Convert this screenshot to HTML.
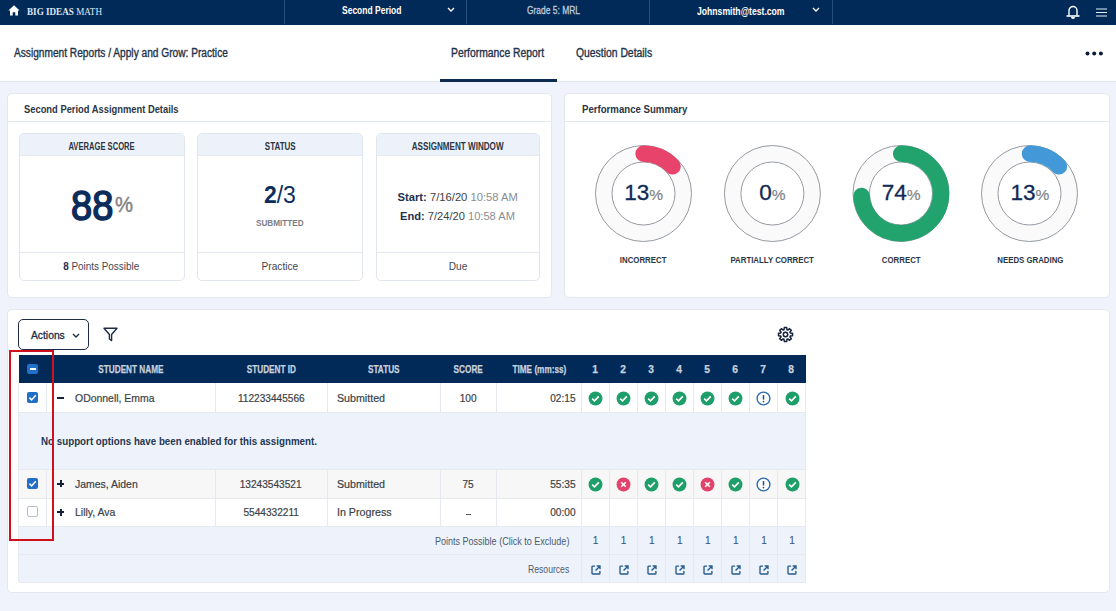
<!DOCTYPE html>
<html><head><meta charset="utf-8">
<style>
*{box-sizing:border-box;margin:0;padding:0}
html,body{width:1116px;height:611px;overflow:hidden;background:#f0f3fb;font-family:"Liberation Sans",sans-serif;color:#263750}
.a{position:absolute;white-space:nowrap}
#nav{position:absolute;left:0;top:0;width:1116px;height:25px;background:#022a58}
.sep{position:absolute;top:0;width:1px;height:24px;background:#2a4d7a}
#hdr{position:absolute;left:0;top:25px;width:1116px;height:57px;background:#fff;border-bottom:1px solid #dfe5ee}
.panel{position:absolute;background:#fff;border:1px solid #e3e8ef;border-radius:5px}
.card{position:absolute;top:133px;width:167px;height:148px;border:1px solid #e1e6ee;border-radius:5px;background:#fff;overflow:hidden}
.card .h{position:absolute;left:0;top:0;width:100%;height:22px;background:#edf2fa;border-bottom:1px solid #e6ebf2}
.card .f{position:absolute;left:0;top:117.5px;width:100%;height:1px;background:#e3e8ef}
</style></head><body>
<div id="nav">
  <svg class="a" style="left:8px;top:4.5px" width="12" height="11" viewBox="0 0 12 11"><path d="M6 0.3 L11.6 5.6 H10 V10.5 H7.3 V7.3 H4.7 V10.5 H2 V5.6 H0.4 Z" fill="#fff"/></svg>
  <div class="a" style="left:27px;top:5.5px;font-family:'Liberation Serif',serif;font-size:10.5px;color:#dfe8f5;transform:scaleX(0.868);transform-origin:0 0"><b>BIG IDEAS</b> MATH</div>
  <div class="sep" style="left:283.5px"></div>
  <div class="sep" style="left:466px"></div>
  <div class="sep" style="left:649px"></div>
  <div class="sep" style="left:832px"></div>
  <div class="a" id="t_sp" style="transform:scaleX(0.808);transform-origin:0 0;left:342px;top:4px;font-size:10.5px;font-weight:bold;color:#fff">Second Period</div>
  <svg class="a" style="left:447px;top:7px" width="8" height="5" viewBox="0 0 8 5"><path d="M1 1 L4 4 L7 1" stroke="#fff" stroke-width="1.3" fill="none"/></svg>
  <div class="a" id="t_gr" style="transform:scaleX(0.803);transform-origin:0 0;left:527px;top:4px;font-size:10.5px;color:#bfcbdd;-webkit-text-stroke:0.3px #bfcbdd">Grade 5: MRL</div>
  <div class="a" id="t_em" style="transform:scaleX(0.822);transform-origin:0 0;left:697px;top:5px;font-size:10.5px;font-weight:bold;color:#fff">Johnsmith@test.com</div>
  <svg class="a" style="left:812px;top:7px" width="8" height="5" viewBox="0 0 8 5"><path d="M1 1 L4 4 L7 1" stroke="#fff" stroke-width="1.3" fill="none"/></svg>
  <svg class="a" style="left:1066px;top:5px" width="14" height="15" viewBox="0 0 14 15"><path d="M3 10.5 V5.5 A4 4 0 0 1 11 5.5 V10.5" stroke="#fff" stroke-width="1.4" fill="none"/><path d="M0.5 11 H13.5" stroke="#fff" stroke-width="1.6"/><path d="M5 12 A2 2 0 0 0 9 12 Z" fill="#fff"/></svg>
  <svg class="a" style="left:1096px;top:8px" width="11" height="9" viewBox="0 0 11 9"><path d="M0 1 H11 M0 4.5 H11 M0 8 H11" stroke="#e6ecf5" stroke-width="1.1"/></svg>
</div>
<div id="hdr">
  <div class="a" id="t_ar" style="transform:scaleX(0.846);transform-origin:0 0;-webkit-text-stroke:0.35px #22324a;left:14px;top:21px;font-size:12px;color:#22324a">Assignment Reports / Apply and Grow: Practice</div>
  <div class="a" id="t_pr" style="transform:scaleX(0.862);transform-origin:0 0;-webkit-text-stroke:0.35px #22324a;left:451px;top:21px;font-size:12px;color:#22324a">Performance Report</div>
  <div class="a" id="t_qd" style="transform:scaleX(0.864);transform-origin:0 0;-webkit-text-stroke:0.35px #22324a;left:576px;top:21px;font-size:12px;color:#22324a">Question Details</div>
  <div class="a" style="left:440px;top:54px;width:117px;height:3px;background:#0a2a4f"></div>
  <svg class="a" style="left:1085.4px;top:25.5px" width="19" height="5" viewBox="0 0 19 5"><circle cx="2.5" cy="2.5" r="2" fill="#0d1b33"/><circle cx="9.2" cy="2.5" r="2" fill="#0d1b33"/><circle cx="15.9" cy="2.5" r="2" fill="#0d1b33"/></svg>
</div>

<!-- left panel -->
<div class="panel" style="left:6.5px;top:93px;width:545.5px;height:204.5px"><div class="a" style="left:0;top:27px;width:543.5px;height:1px;background:#e3e8ef"></div></div>
<div class="a" id="t_spad" style="transform:scaleX(0.891);transform-origin:0 0;font-weight:bold;left:24px;top:102.5px;font-size:10.5px;color:#2b3644">Second Period Assignment Details</div>
<div class="card" style="left:18.5px;width:166.3px"><div class="h"></div><div class="f"></div></div>
<div class="card" style="left:196.6px;width:166.6px"><div class="h"></div><div class="f"></div></div>
<div class="card" style="left:375.8px;width:164.3px"><div class="h"></div><div class="f"></div></div>
<div class="a" id="t_avg" style="left:21.650000000000006px;top:140.5px;width:160px;text-align:center;font-size:10px;font-weight:bold;color:#2b3644;"><span style="display:inline-block;transform:scaleX(0.76)">AVERAGE SCORE</span></div>
<div class="a" id="t_st" style="left:199.89999999999998px;top:140.5px;width:160px;text-align:center;font-size:10px;font-weight:bold;color:#2b3644;"><span style="display:inline-block;transform:scaleX(0.8)">STATUS</span></div>
<div class="a" id="t_aw" style="left:377.95000000000005px;top:140.5px;width:160px;text-align:center;font-size:10px;font-weight:bold;color:#2b3644;"><span style="display:inline-block;transform:scaleX(0.81)">ASSIGNMENT WINDOW</span></div>
<div class="a" id="t_88" style="transform:scaleX(0.885);transform-origin:0 0;left:71px;top:181px;font-size:43px;color:#0c2d5c;-webkit-text-stroke:1.6px #0c2d5c">88</div>
<div class="a" id="t_pc" style="left:115px;top:192px;font-size:22px;color:#808184;-webkit-text-stroke:0.4px #808184;transform:scaleX(0.92);transform-origin:0 0">%</div>
<div class="a" id="t_pp" style="left:21.650000000000006px;top:260px;width:160px;text-align:center;font-size:11px;font-weight:normal;color:#3f4652;"><span style="display:inline-block;transform:scaleX(0.9)"><b style="color:#1d3150">8</b> Points Possible</span></div>
<div class="a" id="t_23" style="left:199.89999999999998px;top:182px;width:160px;text-align:center;font-size:23px;font-weight:normal;color:#0c2d5c;"><span style="display:inline-block;transform:scaleX(1.0)"><b>2</b>/3</span></div>
<div class="a" id="t_sub" style="left:199.89999999999998px;top:218px;width:160px;text-align:center;font-size:8.5px;font-weight:bold;color:#7b7e85;"><span style="display:inline-block;transform:scaleX(0.96)">SUBMITTED</span></div>
<div class="a" id="t_prac" style="left:199.89999999999998px;top:260px;width:160px;text-align:center;font-size:11px;font-weight:normal;color:#3f4652;"><span style="display:inline-block;transform:scaleX(0.92)">Practice</span></div>
<div class="a" id="t_s1" style="left:377.95000000000005px;top:190.7px;width:160px;text-align:center;font-size:11.5px;font-weight:normal;color:#3a3d42;"><span style="display:inline-block;transform:scaleX(0.975)"><b style="color:#1d3150">Start:</b> 7/16/20 <span style="color:#8a8d93">10:58 AM</span></span></div>
<div class="a" id="t_s2" style="left:377.95000000000005px;top:209.7px;width:160px;text-align:center;font-size:11.5px;font-weight:normal;color:#3a3d42;"><span style="display:inline-block;transform:scaleX(0.966)"><b style="color:#1d3150">End:</b> 7/24/20 <span style="color:#8a8d93">10:58 AM</span></span></div>
<div class="a" id="t_due" style="left:377.95000000000005px;top:260px;width:160px;text-align:center;font-size:11px;font-weight:normal;color:#3f4652;"><span style="display:inline-block;transform:scaleX(0.92)">Due</span></div>

<!-- right panel -->
<div class="panel" style="left:564px;top:93px;width:545.5px;height:204.5px"><div class="a" style="left:0;top:27px;width:543.5px;height:1px;background:#e3e8ef"></div></div>
<div class="a" id="t_ps" style="transform:scaleX(0.917);transform-origin:0 0;font-weight:bold;left:582px;top:102.5px;font-size:10.5px;color:#2b3644">Performance Summary</div>

<svg class="a" style="left:565px;top:130px" width="545" height="130" viewBox="565 130 545 130">
  <g fill="#fafafa" stroke="#959aa2" stroke-width="1">
    <circle cx="643.5" cy="193.5" r="48"/><circle cx="772.4" cy="193.5" r="48"/><circle cx="901" cy="193.5" r="48"/><circle cx="1029.5" cy="193.5" r="48"/>
  </g>
  <g fill="#fff" stroke="#959aa2" stroke-width="1">
    <circle cx="643.5" cy="193.5" r="31.5"/><circle cx="772.4" cy="193.5" r="31.5"/><circle cx="901" cy="193.5" r="31.5"/><circle cx="1029.5" cy="193.5" r="31.5"/>
  </g>
  <path d="M643.6 153.75 A39.75 39.75 0 0 1 672.58 166.29" stroke="#e8436b" stroke-width="16.5" fill="none" stroke-linecap="round"/>
  <path d="M901.2 153.75 A39.75 39.75 0 1 1 861.53 196.00" stroke="#22a26c" stroke-width="16.5" fill="none" stroke-linecap="round"/>
  <path d="M1030 153.75 A39.75 39.75 0 0 1 1058.98 166.29" stroke="#4398d8" stroke-width="16.5" fill="none" stroke-linecap="round"/>
</svg>
<div class="a" id="t_d0" style="left:603.6px;top:180px;width:80px;text-align:center;font-size:22.5px;color:#0f2a55;-webkit-text-stroke:0.3px #0f2a55">13<span style="font-size:15.5px;color:#808285;-webkit-text-stroke:0.2px #808285">%</span></div>
<div class="a" id="t_l0" style="left:583.6px;top:254px;width:120px;text-align:center;font-size:9.8px;font-weight:bold;color:#2b3644"><span style="display:inline-block;transform:scaleX(0.8)">INCORRECT</span></div>
<div class="a" id="t_d1" style="left:732.4px;top:180px;width:80px;text-align:center;font-size:22.5px;color:#0f2a55;-webkit-text-stroke:0.3px #0f2a55">0<span style="font-size:15.5px;color:#808285;-webkit-text-stroke:0.2px #808285">%</span></div>
<div class="a" id="t_l1" style="left:712.4px;top:254px;width:120px;text-align:center;font-size:9.8px;font-weight:bold;color:#2b3644"><span style="display:inline-block;transform:scaleX(0.8)">PARTIALLY CORRECT</span></div>
<div class="a" id="t_d2" style="left:861.2px;top:180px;width:80px;text-align:center;font-size:22.5px;color:#0f2a55;-webkit-text-stroke:0.3px #0f2a55">74<span style="font-size:15.5px;color:#808285;-webkit-text-stroke:0.2px #808285">%</span></div>
<div class="a" id="t_l2" style="left:841.2px;top:254px;width:120px;text-align:center;font-size:9.8px;font-weight:bold;color:#2b3644"><span style="display:inline-block;transform:scaleX(0.8)">CORRECT</span></div>
<div class="a" id="t_d3" style="left:990px;top:180px;width:80px;text-align:center;font-size:22.5px;color:#0f2a55;-webkit-text-stroke:0.3px #0f2a55">13<span style="font-size:15.5px;color:#808285;-webkit-text-stroke:0.2px #808285">%</span></div>
<div class="a" id="t_l3" style="left:970px;top:254px;width:120px;text-align:center;font-size:9.8px;font-weight:bold;color:#2b3644"><span style="display:inline-block;transform:scaleX(0.8)">NEEDS GRADING</span></div>












<!-- TABLE START -->
<div class="panel" style="left:7px;top:309px;width:1103px;height:284px"></div>
<div class="a" style="left:18px;top:319px;width:71px;height:31px;border:1.5px solid #1c2d45;border-radius:5px;background:#fff"></div>
<div class="a" id="t_act" style="left:31px;top:329px;font-size:10.5px;color:#1c2d45;-webkit-text-stroke:0.3px #1c2d45;transform:scaleX(0.98);transform-origin:0 0">Actions</div>
<svg class="a" style="left:72px;top:333px" width="8" height="5" viewBox="0 0 8 5"><path d="M1 1 L4 4 L7 1" stroke="#1c2d45" stroke-width="1.4" fill="none"/></svg>
<svg class="a" style="left:103px;top:327px" width="15" height="15" viewBox="0 0 15 15"><path d="M1 1.2 H14 L8.6 7.5 V13.6 L6.4 12 V7.5 Z" stroke="#1c2d45" stroke-width="1.4" fill="none" stroke-linejoin="round"/></svg>
<svg class="a" style="left:777px;top:326px" width="17" height="17" viewBox="-8.5 -8.5 17 17"><path id="gearp" d="M-1.48 -4.78 L-1.20 -7.00 L1.20 -7.00 L1.48 -4.78 L2.33 -4.42 L4.10 -5.80 L5.80 -4.10 L4.42 -2.33 L4.78 -1.48 L7.00 -1.20 L7.00 1.20 L4.78 1.48 L4.42 2.33 L5.80 4.10 L4.10 5.80 L2.33 4.42 L1.48 4.78 L1.20 7.00 L-1.20 7.00 L-1.48 4.78 L-2.33 4.42 L-4.10 5.80 L-5.80 4.10 L-4.42 2.33 L-4.78 1.48 L-7.00 1.20 L-7.00 -1.20 L-4.78 -1.48 L-4.42 -2.33 L-5.80 -4.10 L-4.10 -5.80 L-2.33 -4.42 Z" stroke="#13223a" stroke-width="1.5" fill="none" stroke-linejoin="round"/><circle r="2.2" stroke="#13223a" stroke-width="1.5" fill="none"/></svg>
<div class="a" style="left:18.5px;top:355px;width:787.0px;height:28px;background:#022a58;"></div>
<div class="a" style="left:18.5px;top:383px;width:787.0px;height:29px;background:#fff;"></div>
<div class="a" style="left:18.5px;top:412px;width:787.0px;height:57px;background:#eef3fb;"></div>
<div class="a" style="left:18.5px;top:469px;width:787.0px;height:29px;background:#f7f7f8;"></div>
<div class="a" style="left:18.5px;top:498px;width:787.0px;height:28px;background:#fff;"></div>
<div class="a" style="left:18.5px;top:526px;width:787.0px;height:56px;background:#eef3fb;"></div>
<div class="a" style="left:18.5px;top:411.5px;width:787.0px;height:1.0px;background:#e6e9ef;"></div>
<div class="a" style="left:18.5px;top:468.5px;width:787.0px;height:1.0px;background:#e6e9ef;"></div>
<div class="a" style="left:18.5px;top:497.5px;width:787.0px;height:1.0px;background:#e6e9ef;"></div>
<div class="a" style="left:18.5px;top:525.5px;width:787.0px;height:1.0px;background:#e6e9ef;"></div>
<div class="a" style="left:18.5px;top:553.5px;width:787.0px;height:1.0px;background:#e6e9ef;"></div>
<div class="a" style="left:18.5px;top:581.5px;width:787.0px;height:1.0px;background:#e6e9ef;"></div>
<div class="a" style="left:46.0px;top:383px;width:1.0px;height:29px;background:#e6e9ef;"></div>
<div class="a" style="left:214.5px;top:383px;width:1.0px;height:29px;background:#e6e9ef;"></div>
<div class="a" style="left:326.7px;top:383px;width:1.0px;height:29px;background:#e6e9ef;"></div>
<div class="a" style="left:439.5px;top:383px;width:1.0px;height:29px;background:#e6e9ef;"></div>
<div class="a" style="left:496.3px;top:383px;width:1.0px;height:29px;background:#e6e9ef;"></div>
<div class="a" style="left:581.0px;top:383px;width:1.0px;height:29px;background:#e6e9ef;"></div>
<div class="a" style="left:609.0px;top:383px;width:1.0px;height:29px;background:#e6e9ef;"></div>
<div class="a" style="left:637.0px;top:383px;width:1.0px;height:29px;background:#e6e9ef;"></div>
<div class="a" style="left:665.0px;top:383px;width:1.0px;height:29px;background:#e6e9ef;"></div>
<div class="a" style="left:693.0px;top:383px;width:1.0px;height:29px;background:#e6e9ef;"></div>
<div class="a" style="left:721.0px;top:383px;width:1.0px;height:29px;background:#e6e9ef;"></div>
<div class="a" style="left:749.0px;top:383px;width:1.0px;height:29px;background:#e6e9ef;"></div>
<div class="a" style="left:777.0px;top:383px;width:1.0px;height:29px;background:#e6e9ef;"></div>
<div class="a" style="left:805.0px;top:383px;width:1.0px;height:29px;background:#e6e9ef;"></div>
<div class="a" style="left:805.0px;top:383px;width:1.0px;height:29px;background:#e6e9ef;"></div>
<div class="a" style="left:18.0px;top:383px;width:1.0px;height:29px;background:#e6e9ef;"></div>
<div class="a" style="left:46.0px;top:469px;width:1.0px;height:57px;background:#e6e9ef;"></div>
<div class="a" style="left:214.5px;top:469px;width:1.0px;height:57px;background:#e6e9ef;"></div>
<div class="a" style="left:326.7px;top:469px;width:1.0px;height:57px;background:#e6e9ef;"></div>
<div class="a" style="left:439.5px;top:469px;width:1.0px;height:57px;background:#e6e9ef;"></div>
<div class="a" style="left:496.3px;top:469px;width:1.0px;height:57px;background:#e6e9ef;"></div>
<div class="a" style="left:581.0px;top:469px;width:1.0px;height:57px;background:#e6e9ef;"></div>
<div class="a" style="left:609.0px;top:469px;width:1.0px;height:57px;background:#e6e9ef;"></div>
<div class="a" style="left:637.0px;top:469px;width:1.0px;height:57px;background:#e6e9ef;"></div>
<div class="a" style="left:665.0px;top:469px;width:1.0px;height:57px;background:#e6e9ef;"></div>
<div class="a" style="left:693.0px;top:469px;width:1.0px;height:57px;background:#e6e9ef;"></div>
<div class="a" style="left:721.0px;top:469px;width:1.0px;height:57px;background:#e6e9ef;"></div>
<div class="a" style="left:749.0px;top:469px;width:1.0px;height:57px;background:#e6e9ef;"></div>
<div class="a" style="left:777.0px;top:469px;width:1.0px;height:57px;background:#e6e9ef;"></div>
<div class="a" style="left:805.0px;top:469px;width:1.0px;height:57px;background:#e6e9ef;"></div>
<div class="a" style="left:805.0px;top:469px;width:1.0px;height:57px;background:#e6e9ef;"></div>
<div class="a" style="left:18.0px;top:469px;width:1.0px;height:57px;background:#e6e9ef;"></div>
<div class="a" style="left:18.0px;top:412px;width:1.0px;height:57px;background:#e6e9ef;"></div>
<div class="a" style="left:805.0px;top:412px;width:1.0px;height:57px;background:#e6e9ef;"></div>
<div class="a" style="left:18.0px;top:526px;width:1.0px;height:56px;background:#e6e9ef;"></div>
<div class="a" style="left:581.0px;top:526px;width:1.0px;height:56px;background:#e6e9ef;"></div>
<div class="a" style="left:609.0px;top:526px;width:1.0px;height:56px;background:#e6e9ef;"></div>
<div class="a" style="left:637.0px;top:526px;width:1.0px;height:56px;background:#e6e9ef;"></div>
<div class="a" style="left:665.0px;top:526px;width:1.0px;height:56px;background:#e6e9ef;"></div>
<div class="a" style="left:693.0px;top:526px;width:1.0px;height:56px;background:#e6e9ef;"></div>
<div class="a" style="left:721.0px;top:526px;width:1.0px;height:56px;background:#e6e9ef;"></div>
<div class="a" style="left:749.0px;top:526px;width:1.0px;height:56px;background:#e6e9ef;"></div>
<div class="a" style="left:777.0px;top:526px;width:1.0px;height:56px;background:#e6e9ef;"></div>
<div class="a" style="left:805.0px;top:526px;width:1.0px;height:56px;background:#e6e9ef;"></div>
<div class="a" style="left:805.0px;top:526px;width:1.0px;height:56px;background:#e6e9ef;"></div>
<div class="a" id="t_h0" style="left:46.5px;top:362.5px;width:168.5px;text-align:center;font-size:10.8px;font-weight:bold;color:#c8d1de;-webkit-text-stroke:0.25px #c8d1de"><span style="display:inline-block;transform:scaleX(0.76)">STUDENT NAME</span></div>
<div class="a" id="t_h1" style="left:215px;top:362.5px;width:112.19999999999999px;text-align:center;font-size:10.8px;font-weight:bold;color:#c8d1de;-webkit-text-stroke:0.25px #c8d1de"><span style="display:inline-block;transform:scaleX(0.76)">STUDENT ID</span></div>
<div class="a" id="t_h2" style="left:327.2px;top:362.5px;width:112.80000000000001px;text-align:center;font-size:10.8px;font-weight:bold;color:#c8d1de;-webkit-text-stroke:0.25px #c8d1de"><span style="display:inline-block;transform:scaleX(0.76)">STATUS</span></div>
<div class="a" id="t_h3" style="left:440px;top:362.5px;width:56.80000000000001px;text-align:center;font-size:10.8px;font-weight:bold;color:#c8d1de;-webkit-text-stroke:0.25px #c8d1de"><span style="display:inline-block;transform:scaleX(0.76)">SCORE</span></div>
<div class="a" id="t_h4" style="left:496.8px;top:362.5px;width:84.69999999999999px;text-align:center;font-size:10.8px;font-weight:bold;color:#c8d1de;-webkit-text-stroke:0.25px #c8d1de"><span style="display:inline-block;transform:scaleX(0.76)">TIME (mm:ss)</span></div>
<div class="a" id="t_h5" style="left:581.5px;top:362.5px;width:28.0px;text-align:center;font-size:10.8px;font-weight:bold;color:#c8d1de;-webkit-text-stroke:0.25px #c8d1de"><span style="display:inline-block;transform:scaleX(0.95)">1</span></div>
<div class="a" id="t_h6" style="left:609.5px;top:362.5px;width:28.0px;text-align:center;font-size:10.8px;font-weight:bold;color:#c8d1de;-webkit-text-stroke:0.25px #c8d1de"><span style="display:inline-block;transform:scaleX(0.95)">2</span></div>
<div class="a" id="t_h7" style="left:637.5px;top:362.5px;width:28.0px;text-align:center;font-size:10.8px;font-weight:bold;color:#c8d1de;-webkit-text-stroke:0.25px #c8d1de"><span style="display:inline-block;transform:scaleX(0.95)">3</span></div>
<div class="a" id="t_h8" style="left:665.5px;top:362.5px;width:28.0px;text-align:center;font-size:10.8px;font-weight:bold;color:#c8d1de;-webkit-text-stroke:0.25px #c8d1de"><span style="display:inline-block;transform:scaleX(0.95)">4</span></div>
<div class="a" id="t_h9" style="left:693.5px;top:362.5px;width:28.0px;text-align:center;font-size:10.8px;font-weight:bold;color:#c8d1de;-webkit-text-stroke:0.25px #c8d1de"><span style="display:inline-block;transform:scaleX(0.95)">5</span></div>
<div class="a" id="t_h10" style="left:721.5px;top:362.5px;width:28.0px;text-align:center;font-size:10.8px;font-weight:bold;color:#c8d1de;-webkit-text-stroke:0.25px #c8d1de"><span style="display:inline-block;transform:scaleX(0.95)">6</span></div>
<div class="a" id="t_h11" style="left:749.5px;top:362.5px;width:28.0px;text-align:center;font-size:10.8px;font-weight:bold;color:#c8d1de;-webkit-text-stroke:0.25px #c8d1de"><span style="display:inline-block;transform:scaleX(0.95)">7</span></div>
<div class="a" id="t_h12" style="left:777.5px;top:362.5px;width:28.0px;text-align:center;font-size:10.8px;font-weight:bold;color:#c8d1de;-webkit-text-stroke:0.25px #c8d1de"><span style="display:inline-block;transform:scaleX(0.95)">8</span></div>
<div class="a" style="left:27px;top:364px;width:11px;height:10px;border-radius:2px;background:#1f70c8"></div>
<div class="a" style="left:29.5px;top:368px;width:6px;height:2px;background:#fff"></div>
<div class="a" style="left:27px;top:392px;width:11px;height:11px;border-radius:2px;background:#1f6fc6"></div><svg class="a" style="left:27px;top:392px" width="11" height="11" viewBox="0 0 11 11"><path d="M2.4 5.6 L4.6 7.8 L8.8 3.2" stroke="#fff" stroke-width="1.5" fill="none"/></svg>
<div class="a" style="left:27px;top:478px;width:11px;height:11px;border-radius:2px;background:#1f6fc6"></div><svg class="a" style="left:27px;top:478px" width="11" height="11" viewBox="0 0 11 11"><path d="M2.4 5.6 L4.6 7.8 L8.8 3.2" stroke="#fff" stroke-width="1.5" fill="none"/></svg>
<div class="a" style="left:27px;top:506px;width:11px;height:11px;border-radius:2px;background:#fff;border:1.2px solid #b9bdc4"></div>
<div class="a" style="left:57px;top:396.5px;width:7px;height:2px;background:#13223a"></div>
<div class="a" id="t_r1n" style="left:75px;top:391.5px;font-size:11px;color:#3b3f46;-webkit-text-stroke:0.2px #3b3f46;transform:scaleX(0.95);transform-origin:0 0">ODonnell, Emma</div>
<div class="a" id="t_r1i" style="left:215px;top:391.5px;width:112px;text-align:center;font-size:11px;color:#3b3f46;-webkit-text-stroke:0.2px #3b3f46;"><span style="display:inline-block;transform:scaleX(0.92)">112233445566</span></div>
<div class="a" id="t_r1s" style="left:337px;top:391.5px;font-size:11px;color:#3b3f46;-webkit-text-stroke:0.2px #3b3f46;transform:scaleX(0.97);transform-origin:0 0">Submitted</div>
<div class="a" id="t_r1c" style="left:440px;top:391.5px;width:57px;text-align:center;font-size:11px;color:#3b3f46;-webkit-text-stroke:0.2px #3b3f46;"><span style="display:inline-block;transform:scaleX(0.92)">100</span></div>
<div class="a" id="t_r1t" style="left:496px;top:391.5px;width:80px;text-align:right;font-size:11px;color:#3b3f46;-webkit-text-stroke:0.2px #3b3f46;"><span style="display:inline-block;transform:scaleX(0.92);transform-origin:100% 0">02:15</span></div>
<div class="a" style="left:57px;top:482.5px;width:7px;height:2px;background:#13223a"></div>
<div class="a" style="left:59.5px;top:480.0px;width:2px;height:7px;background:#13223a"></div>
<div class="a" id="t_r2n" style="left:75px;top:477.5px;font-size:11px;color:#3b3f46;-webkit-text-stroke:0.2px #3b3f46;transform:scaleX(0.95);transform-origin:0 0">James, Aiden</div>
<div class="a" id="t_r2i" style="left:215px;top:477.5px;width:112px;text-align:center;font-size:11px;color:#3b3f46;-webkit-text-stroke:0.2px #3b3f46;"><span style="display:inline-block;transform:scaleX(0.92)">13243543521</span></div>
<div class="a" id="t_r2s" style="left:337px;top:477.5px;font-size:11px;color:#3b3f46;-webkit-text-stroke:0.2px #3b3f46;transform:scaleX(0.97);transform-origin:0 0">Submitted</div>
<div class="a" id="t_r2c" style="left:440px;top:477.5px;width:57px;text-align:center;font-size:11px;color:#3b3f46;-webkit-text-stroke:0.2px #3b3f46;"><span style="display:inline-block;transform:scaleX(0.92)">75</span></div>
<div class="a" id="t_r2t" style="left:496px;top:477.5px;width:80px;text-align:right;font-size:11px;color:#3b3f46;-webkit-text-stroke:0.2px #3b3f46;"><span style="display:inline-block;transform:scaleX(0.92);transform-origin:100% 0">55:35</span></div>
<div class="a" style="left:57px;top:511px;width:7px;height:2px;background:#13223a"></div>
<div class="a" style="left:59.5px;top:508.5px;width:2px;height:7px;background:#13223a"></div>
<div class="a" id="t_r3n" style="left:75px;top:506px;font-size:11px;color:#3b3f46;-webkit-text-stroke:0.2px #3b3f46;transform:scaleX(0.95);transform-origin:0 0">Lilly, Ava</div>
<div class="a" id="t_r3i" style="left:215px;top:506px;width:112px;text-align:center;font-size:11px;color:#3b3f46;-webkit-text-stroke:0.2px #3b3f46;"><span style="display:inline-block;transform:scaleX(0.92)">5544332211</span></div>
<div class="a" id="t_r3s" style="left:337px;top:506px;font-size:11px;color:#3b3f46;-webkit-text-stroke:0.2px #3b3f46;transform:scaleX(0.97);transform-origin:0 0">In Progress</div>
<div class="a" id="t_r3c" style="left:440px;top:506px;width:57px;text-align:center;font-size:11px;color:#3b3f46;-webkit-text-stroke:0.2px #3b3f46;"><span style="display:inline-block;transform:scaleX(0.92)"></span></div>
<div class="a" id="t_r3t" style="left:496px;top:506px;width:80px;text-align:right;font-size:11px;color:#3b3f46;-webkit-text-stroke:0.2px #3b3f46;"><span style="display:inline-block;transform:scaleX(0.92);transform-origin:100% 0">00:00</span></div>
<div class="a" style="left:465.5px;top:513.5px;width:5.5px;height:1.2px;background:#555a62"></div>
<div class="a" id="t_nos" style="left:41px;top:435px;font-size:10.6px;font-weight:bold;color:#263750;transform:scaleX(0.923);transform-origin:0 0">No support options have been enabled for this assignment.</div>
<svg class="a" style="left:588.0px;top:390.5px" width="15" height="15" viewBox="0 0 15 15"><circle cx="7.5" cy="7.5" r="6.95" fill="#1e9e69"/><path d="M4.2 7.6 L6.5 9.8 L10.8 5.4" stroke="#fff" stroke-width="1.7" fill="none"/></svg>
<svg class="a" style="left:588.0px;top:476.5px" width="15" height="15" viewBox="0 0 15 15"><circle cx="7.5" cy="7.5" r="6.95" fill="#1e9e69"/><path d="M4.2 7.6 L6.5 9.8 L10.8 5.4" stroke="#fff" stroke-width="1.7" fill="none"/></svg>
<div class="a" style="left:581.5px;top:534.5px;width:28px;text-align:center;font-size:10px;color:#3f5677;-webkit-text-stroke:0.1px #3f5677">1</div>
<svg class="a" style="left:590.5px;top:564.5px" width="10" height="10" viewBox="0 0 11 11"><path d="M4.5 1.2 H2 A0.9 0.9 0 0 0 1.1 2.1 V9 A0.9 0.9 0 0 0 2 9.9 H8.9 A0.9 0.9 0 0 0 9.8 9 V6.5" stroke="#275c90" stroke-width="1.5" fill="none"/><path d="M6.3 1.1 H9.9 V4.7 M9.7 1.3 L5 6" stroke="#275c90" stroke-width="1.5" fill="none"/></svg>
<svg class="a" style="left:616.08px;top:390.5px" width="15" height="15" viewBox="0 0 15 15"><circle cx="7.5" cy="7.5" r="6.95" fill="#1e9e69"/><path d="M4.2 7.6 L6.5 9.8 L10.8 5.4" stroke="#fff" stroke-width="1.7" fill="none"/></svg>
<svg class="a" style="left:616.08px;top:476.5px" width="15" height="15" viewBox="0 0 15 15"><circle cx="7.5" cy="7.5" r="6.95" fill="#e2436a"/><path d="M5.2 5.2 L9.8 9.8 M9.8 5.2 L5.2 9.8" stroke="#fff" stroke-width="1.6" fill="none"/></svg>
<div class="a" style="left:609.58px;top:534.5px;width:28px;text-align:center;font-size:10px;color:#3f5677;-webkit-text-stroke:0.1px #3f5677">1</div>
<svg class="a" style="left:618.58px;top:564.5px" width="10" height="10" viewBox="0 0 11 11"><path d="M4.5 1.2 H2 A0.9 0.9 0 0 0 1.1 2.1 V9 A0.9 0.9 0 0 0 2 9.9 H8.9 A0.9 0.9 0 0 0 9.8 9 V6.5" stroke="#275c90" stroke-width="1.5" fill="none"/><path d="M6.3 1.1 H9.9 V4.7 M9.7 1.3 L5 6" stroke="#275c90" stroke-width="1.5" fill="none"/></svg>
<svg class="a" style="left:644.16px;top:390.5px" width="15" height="15" viewBox="0 0 15 15"><circle cx="7.5" cy="7.5" r="6.95" fill="#1e9e69"/><path d="M4.2 7.6 L6.5 9.8 L10.8 5.4" stroke="#fff" stroke-width="1.7" fill="none"/></svg>
<svg class="a" style="left:644.16px;top:476.5px" width="15" height="15" viewBox="0 0 15 15"><circle cx="7.5" cy="7.5" r="6.95" fill="#1e9e69"/><path d="M4.2 7.6 L6.5 9.8 L10.8 5.4" stroke="#fff" stroke-width="1.7" fill="none"/></svg>
<div class="a" style="left:637.66px;top:534.5px;width:28px;text-align:center;font-size:10px;color:#3f5677;-webkit-text-stroke:0.1px #3f5677">1</div>
<svg class="a" style="left:646.66px;top:564.5px" width="10" height="10" viewBox="0 0 11 11"><path d="M4.5 1.2 H2 A0.9 0.9 0 0 0 1.1 2.1 V9 A0.9 0.9 0 0 0 2 9.9 H8.9 A0.9 0.9 0 0 0 9.8 9 V6.5" stroke="#275c90" stroke-width="1.5" fill="none"/><path d="M6.3 1.1 H9.9 V4.7 M9.7 1.3 L5 6" stroke="#275c90" stroke-width="1.5" fill="none"/></svg>
<svg class="a" style="left:672.24px;top:390.5px" width="15" height="15" viewBox="0 0 15 15"><circle cx="7.5" cy="7.5" r="6.95" fill="#1e9e69"/><path d="M4.2 7.6 L6.5 9.8 L10.8 5.4" stroke="#fff" stroke-width="1.7" fill="none"/></svg>
<svg class="a" style="left:672.24px;top:476.5px" width="15" height="15" viewBox="0 0 15 15"><circle cx="7.5" cy="7.5" r="6.95" fill="#1e9e69"/><path d="M4.2 7.6 L6.5 9.8 L10.8 5.4" stroke="#fff" stroke-width="1.7" fill="none"/></svg>
<div class="a" style="left:665.74px;top:534.5px;width:28px;text-align:center;font-size:10px;color:#3f5677;-webkit-text-stroke:0.1px #3f5677">1</div>
<svg class="a" style="left:674.74px;top:564.5px" width="10" height="10" viewBox="0 0 11 11"><path d="M4.5 1.2 H2 A0.9 0.9 0 0 0 1.1 2.1 V9 A0.9 0.9 0 0 0 2 9.9 H8.9 A0.9 0.9 0 0 0 9.8 9 V6.5" stroke="#275c90" stroke-width="1.5" fill="none"/><path d="M6.3 1.1 H9.9 V4.7 M9.7 1.3 L5 6" stroke="#275c90" stroke-width="1.5" fill="none"/></svg>
<svg class="a" style="left:700.3199999999999px;top:390.5px" width="15" height="15" viewBox="0 0 15 15"><circle cx="7.5" cy="7.5" r="6.95" fill="#1e9e69"/><path d="M4.2 7.6 L6.5 9.8 L10.8 5.4" stroke="#fff" stroke-width="1.7" fill="none"/></svg>
<svg class="a" style="left:700.3199999999999px;top:476.5px" width="15" height="15" viewBox="0 0 15 15"><circle cx="7.5" cy="7.5" r="6.95" fill="#e2436a"/><path d="M5.2 5.2 L9.8 9.8 M9.8 5.2 L5.2 9.8" stroke="#fff" stroke-width="1.6" fill="none"/></svg>
<div class="a" style="left:693.8199999999999px;top:534.5px;width:28px;text-align:center;font-size:10px;color:#3f5677;-webkit-text-stroke:0.1px #3f5677">1</div>
<svg class="a" style="left:702.8199999999999px;top:564.5px" width="10" height="10" viewBox="0 0 11 11"><path d="M4.5 1.2 H2 A0.9 0.9 0 0 0 1.1 2.1 V9 A0.9 0.9 0 0 0 2 9.9 H8.9 A0.9 0.9 0 0 0 9.8 9 V6.5" stroke="#275c90" stroke-width="1.5" fill="none"/><path d="M6.3 1.1 H9.9 V4.7 M9.7 1.3 L5 6" stroke="#275c90" stroke-width="1.5" fill="none"/></svg>
<svg class="a" style="left:728.4px;top:390.5px" width="15" height="15" viewBox="0 0 15 15"><circle cx="7.5" cy="7.5" r="6.95" fill="#1e9e69"/><path d="M4.2 7.6 L6.5 9.8 L10.8 5.4" stroke="#fff" stroke-width="1.7" fill="none"/></svg>
<svg class="a" style="left:728.4px;top:476.5px" width="15" height="15" viewBox="0 0 15 15"><circle cx="7.5" cy="7.5" r="6.95" fill="#1e9e69"/><path d="M4.2 7.6 L6.5 9.8 L10.8 5.4" stroke="#fff" stroke-width="1.7" fill="none"/></svg>
<div class="a" style="left:721.9px;top:534.5px;width:28px;text-align:center;font-size:10px;color:#3f5677;-webkit-text-stroke:0.1px #3f5677">1</div>
<svg class="a" style="left:730.9px;top:564.5px" width="10" height="10" viewBox="0 0 11 11"><path d="M4.5 1.2 H2 A0.9 0.9 0 0 0 1.1 2.1 V9 A0.9 0.9 0 0 0 2 9.9 H8.9 A0.9 0.9 0 0 0 9.8 9 V6.5" stroke="#275c90" stroke-width="1.5" fill="none"/><path d="M6.3 1.1 H9.9 V4.7 M9.7 1.3 L5 6" stroke="#275c90" stroke-width="1.5" fill="none"/></svg>
<svg class="a" style="left:756.48px;top:390.5px" width="15" height="15" viewBox="0 0 15 15"><circle cx="7.5" cy="7.5" r="6.4" fill="#fff" stroke="#2b6cb0" stroke-width="1.4"/><path d="M7.5 4 V8.6" stroke="#2b4f80" stroke-width="1.5"/><circle cx="7.5" cy="10.6" r="0.85" fill="#2b4f80"/></svg>
<svg class="a" style="left:756.48px;top:476.5px" width="15" height="15" viewBox="0 0 15 15"><circle cx="7.5" cy="7.5" r="6.4" fill="#fff" stroke="#2b6cb0" stroke-width="1.4"/><path d="M7.5 4 V8.6" stroke="#2b4f80" stroke-width="1.5"/><circle cx="7.5" cy="10.6" r="0.85" fill="#2b4f80"/></svg>
<div class="a" style="left:749.98px;top:534.5px;width:28px;text-align:center;font-size:10px;color:#3f5677;-webkit-text-stroke:0.1px #3f5677">1</div>
<svg class="a" style="left:758.98px;top:564.5px" width="10" height="10" viewBox="0 0 11 11"><path d="M4.5 1.2 H2 A0.9 0.9 0 0 0 1.1 2.1 V9 A0.9 0.9 0 0 0 2 9.9 H8.9 A0.9 0.9 0 0 0 9.8 9 V6.5" stroke="#275c90" stroke-width="1.5" fill="none"/><path d="M6.3 1.1 H9.9 V4.7 M9.7 1.3 L5 6" stroke="#275c90" stroke-width="1.5" fill="none"/></svg>
<svg class="a" style="left:784.56px;top:390.5px" width="15" height="15" viewBox="0 0 15 15"><circle cx="7.5" cy="7.5" r="6.95" fill="#1e9e69"/><path d="M4.2 7.6 L6.5 9.8 L10.8 5.4" stroke="#fff" stroke-width="1.7" fill="none"/></svg>
<svg class="a" style="left:784.56px;top:476.5px" width="15" height="15" viewBox="0 0 15 15"><circle cx="7.5" cy="7.5" r="6.95" fill="#1e9e69"/><path d="M4.2 7.6 L6.5 9.8 L10.8 5.4" stroke="#fff" stroke-width="1.7" fill="none"/></svg>
<div class="a" style="left:778.06px;top:534.5px;width:28px;text-align:center;font-size:10px;color:#3f5677;-webkit-text-stroke:0.1px #3f5677">1</div>
<svg class="a" style="left:787.06px;top:564.5px" width="10" height="10" viewBox="0 0 11 11"><path d="M4.5 1.2 H2 A0.9 0.9 0 0 0 1.1 2.1 V9 A0.9 0.9 0 0 0 2 9.9 H8.9 A0.9 0.9 0 0 0 9.8 9 V6.5" stroke="#275c90" stroke-width="1.5" fill="none"/><path d="M6.3 1.1 H9.9 V4.7 M9.7 1.3 L5 6" stroke="#275c90" stroke-width="1.5" fill="none"/></svg>
<div class="a" id="t_ppx" style="left:369.5px;top:535px;width:200px;text-align:right;font-size:10.5px;color:#4d5a6d"><span style="display:inline-block;transform:scaleX(0.86);transform-origin:100% 0">Points Possible (Click to Exclude)</span></div>
<div class="a" id="t_res" style="left:419.5px;top:563px;width:150px;text-align:right;font-size:10.5px;color:#4d5a6d"><span style="display:inline-block;transform:scaleX(0.82);transform-origin:100% 0">Resources</span></div>
<div class="a" style="left:9px;top:350px;width:45px;height:191px;border:2px solid #d0101e"></div>
<!-- TABLE END -->
</body></html>
